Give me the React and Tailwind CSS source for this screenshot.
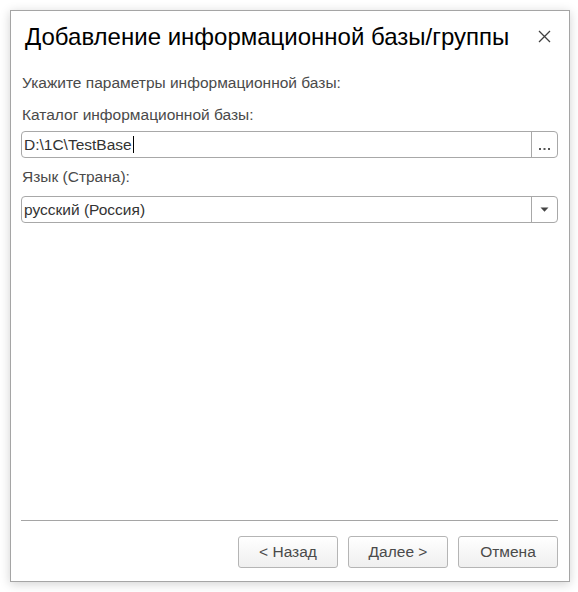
import React from 'react';

const font = { fontFamily: '"Liberation Sans", Arial, sans-serif' };

const Button = ({ children }) => (
  <button className="w-[100px] h-[32px] rounded-[3px] border border-[#b5b5b5] bg-gradient-to-b from-white to-[#efefef] text-[15.5px] text-[#4a4a4a] leading-none">
    {children}
  </button>
);

const App = () => {
  return (
    <div className="w-[578px] h-[592px] bg-white pt-[10px] pl-[10px]" style={font}>
      <div className="w-[560px] h-[572px] bg-white border border-[#a5a5a5] shadow-[0_2px_10px_rgba(0,0,0,0.18)] flex flex-col">
        <div className="flex items-center justify-between h-[50px] pl-[14px] pr-[18px]">
          <h1 className="text-[24px] text-black leading-none pt-[2px]">Добавление информационной базы/группы</h1>
          <button className="text-[#404040]">
            <svg width="13" height="13" viewBox="0 0 13 13">
              <path d="M1 1L12 12M12 1L1 12" stroke="#404040" strokeWidth="1.3" />
            </svg>
          </button>
        </div>

        <div className="flex-1 flex flex-col pl-[10px] pr-[11px] text-[15.5px] text-[#4a4a4a]">
          <div className="h-[32px] flex items-center pl-[1px] mt-[6px]">Укажите параметры информационной базы:</div>
          <div className="h-[32px] flex items-center pl-[1px]">Каталог информационной базы:</div>
          <div className="flex h-[27px] border border-[#a8a8a8] rounded-[4px] bg-white">
            <div className="flex-1 flex items-center pl-[2px] text-[#333]">
              D:\1C\TestBase<span className="inline-block w-px h-[17px] bg-black ml-[1px]"></span>
            </div>
            <div className="w-[26px] border-l border-[#a8a8a8] flex items-end justify-center pb-[6px]">
              <svg width="11" height="3" viewBox="0 0 11 3">
                <rect x="0" y="0" width="2" height="2" fill="#555" />
                <rect x="4.5" y="0" width="2" height="2" fill="#555" />
                <rect x="9" y="0" width="2" height="2" fill="#555" />
              </svg>
            </div>
          </div>
          <div className="h-[38px] flex items-center pl-[1px]">Язык (Страна):</div>
          <div className="flex h-[27px] border border-[#a8a8a8] rounded-[4px] bg-white">
            <div className="flex-1 flex items-center pl-[2px] text-[#333]">русский (Россия)</div>
            <div className="w-[26px] border-l border-[#a8a8a8] flex items-center justify-center">
              <svg width="9" height="5" viewBox="0 0 9 5">
                <path d="M0.5 0.5H8.5L4.5 4.8Z" fill="#444" />
              </svg>
            </div>
          </div>

          <div className="flex-1"></div>

          <div className="border-t border-[#a5a5a5]"></div>
          <div className="flex justify-end gap-[10px] pt-[15px] pb-[13px]">
            <Button>&lt; Назад</Button>
            <Button>Далее &gt;</Button>
            <Button>Отмена</Button>
          </div>
        </div>
      </div>
    </div>
  );
};

export default App;
